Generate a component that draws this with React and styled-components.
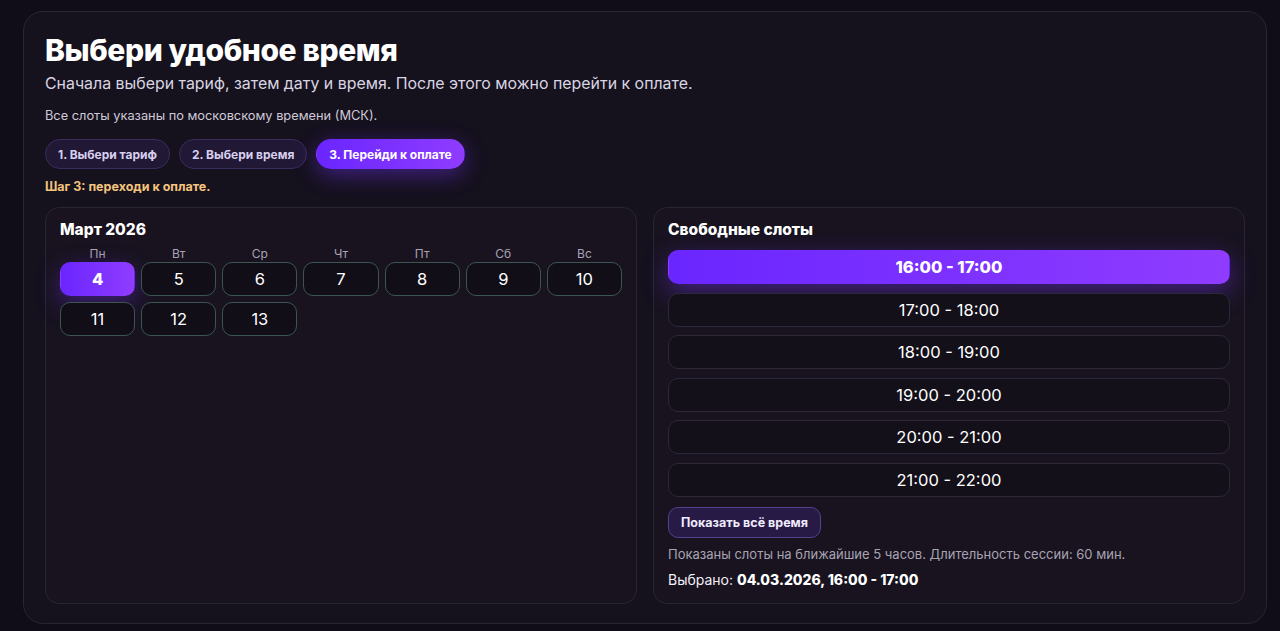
import React from "react";
import styled, { createGlobalStyle } from "styled-components";

const Global = createGlobalStyle`
  html, body { margin: 0; padding: 0; background: #110d18; }
  body { font-family: "Inter", "Noto Sans", sans-serif; color: #f3f0f8; }
  * { box-sizing: border-box; }
`;

const Page = styled.div`
  padding: 11px 13px 7px 23px;
`;

const Shell = styled.section`
  height: 613px;
  border: 1px solid #2a2536;
  border-radius: 20px;
  background: #15111d;
  padding: 20px 21px 20px 21px;
  display: flex;
  flex-direction: column;
`;

const Title = styled.h1`
  margin: 0;
  font-size: 30px;
  line-height: 36px;
  font-weight: 800;
  letter-spacing: -0.4px;
  color: #ffffff;
`;

const Subtitle = styled.p`
  margin: 5px 0 0;
  font-size: 15.9px;
  line-height: 22px;
  color: #d9d5e2;
`;

const Note = styled.p`
  margin: 11px 0 0;
  font-size: 12.8px;
  line-height: 20px;
  color: #cfcad8;
`;

const Steps = styled.div`
  display: flex;
  gap: 9px;
  margin-top: 13px;
`;

const Step = styled.div`
  height: 30px;
  padding: 0 12px;
  display: flex;
  align-items: center;
  border-radius: 15px;
  font-size: 12px;
  font-weight: 700;
  color: ${(p) => (p.$active ? "#ffffff" : "#d8d0ee")};
  background: ${(p) =>
    p.$active ? "linear-gradient(90deg, #6a26ff, #8f3cff)" : "#211836"};
  border: 1px solid ${(p) => (p.$active ? "transparent" : "#3a2d5e")};
  box-shadow: ${(p) => (p.$active ? "0 6px 22px rgba(120, 50, 255, 0.45)" : "none")};
`;

const Hint = styled.p`
  margin: 9px 0 0;
  font-size: 12.5px;
  line-height: 18px;
  font-weight: 700;
  color: #f4c47e;
`;

const Columns = styled.div`
  margin-top: 11px;
  display: grid;
  grid-template-columns: 1fr 1fr;
  gap: 16px;
  flex: 1;
`;

const Card = styled.div`
  border: 1px solid #2a2437;
  border-radius: 14px;
  background: #18131f;
  padding: 12px 14px 14px 14px;
  display: flex;
  flex-direction: column;
`;

const CardTitle = styled.h2`
  margin: 0;
  font-size: 15.5px;
  line-height: 20px;
  font-weight: 800;
  color: #ffffff;
`;

const Grid = styled.div`
  margin-top: 8px;
  display: grid;
  grid-template-columns: repeat(7, 1fr);
  column-gap: 6px;
  row-gap: 6px;
`;

const Weekday = styled.div`
  text-align: center;
  font-size: 12px;
  line-height: 12px;
  color: #a8a3b4;
  margin-bottom: -4px;
`;

const Day = styled.div`
  height: 34px;
  border-radius: 10px;
  display: flex;
  align-items: center;
  justify-content: center;
  font-size: 16.5px;
  font-weight: ${(p) => (p.$active ? 800 : 400)};
  color: #ffffff;
  border: 1px solid ${(p) => (p.$active ? "transparent" : "#3b5652")};
  background: ${(p) =>
    p.$active ? "linear-gradient(90deg, #6a26ff, #8f3cff)" : "#120e18"};
  box-shadow: ${(p) => (p.$active ? "0 8px 24px rgba(120, 50, 255, 0.4)" : "none")};
`;

const Slots = styled.div`
  margin-top: 10px;
  display: flex;
  flex-direction: column;
  gap: 8.5px;
`;

const Slot = styled.div`
  height: 34px;
  border-radius: 10px;
  display: flex;
  align-items: center;
  justify-content: center;
  font-size: 16.5px;
  font-weight: ${(p) => (p.$active ? 800 : 400)};
  color: #ffffff;
  border: 1px solid ${(p) => (p.$active ? "transparent" : "#2d2839")};
  background: ${(p) =>
    p.$active ? "linear-gradient(90deg, #6a26ff, #8f3cff)" : "#141019"};
  box-shadow: ${(p) => (p.$active ? "0 8px 26px rgba(120, 50, 255, 0.45)" : "none")};
`;

const ShowAll = styled.button`
  align-self: flex-start;
  margin-top: 10px;
  height: 31px;
  padding: 0 12px;
  border-radius: 10px;
  border: 1px solid #54408e;
  background: #271a44;
  color: #f0eaff;
  font-family: inherit;
  font-size: 12.5px;
  font-weight: 700;
`;

const Info = styled.p`
  margin: 7px 0 0;
  font-size: 13px;
  line-height: 18px;
  color: #a8a3b3;
`;

const Selected = styled.p`
  margin: 8px 0 0;
  font-size: 14px;
  line-height: 18px;
  color: #f2eff7;
  b { font-weight: 800; color: #fff; }
`;

const weekdays = ["Пн", "Вт", "Ср", "Чт", "Пт", "Сб", "Вс"];
const days = [4, 5, 6, 7, 8, 9, 10, 11, 12, 13];
const slots = [
  "16:00 - 17:00",
  "17:00 - 18:00",
  "18:00 - 19:00",
  "19:00 - 20:00",
  "20:00 - 21:00",
  "21:00 - 22:00",
];

export default function App() {
  return (
    <Page>
      <Global />
      <Shell>
        <Title>Выбери удобное время</Title>
        <Subtitle>Сначала выбери тариф, затем дату и время. После этого можно перейти к оплате.</Subtitle>
        <Note>Все слоты указаны по московскому времени (МСК).</Note>
        <Steps>
          <Step>1. Выбери тариф</Step>
          <Step>2. Выбери время</Step>
          <Step $active>3. Перейди к оплате</Step>
        </Steps>
        <Hint>Шаг 3: переходи к оплате.</Hint>
        <Columns>
          <Card>
            <CardTitle>Март 2026</CardTitle>
            <Grid>
              {weekdays.map((w) => (
                <Weekday key={w}>{w}</Weekday>
              ))}
              {days.map((d) => (
                <Day key={d} $active={d === 4}>{d}</Day>
              ))}
            </Grid>
          </Card>
          <Card>
            <CardTitle>Свободные слоты</CardTitle>
            <Slots>
              {slots.map((s, i) => (
                <Slot key={s} $active={i === 0}>{s}</Slot>
              ))}
            </Slots>
            <ShowAll>Показать всё время</ShowAll>
            <Info>Показаны слоты на ближайшие 5 часов. Длительность сессии: 60 мин.</Info>
            <Selected>
              Выбрано: <b>04.03.2026, 16:00 - 17:00</b>
            </Selected>
          </Card>
        </Columns>
      </Shell>
    </Page>
  );
}
